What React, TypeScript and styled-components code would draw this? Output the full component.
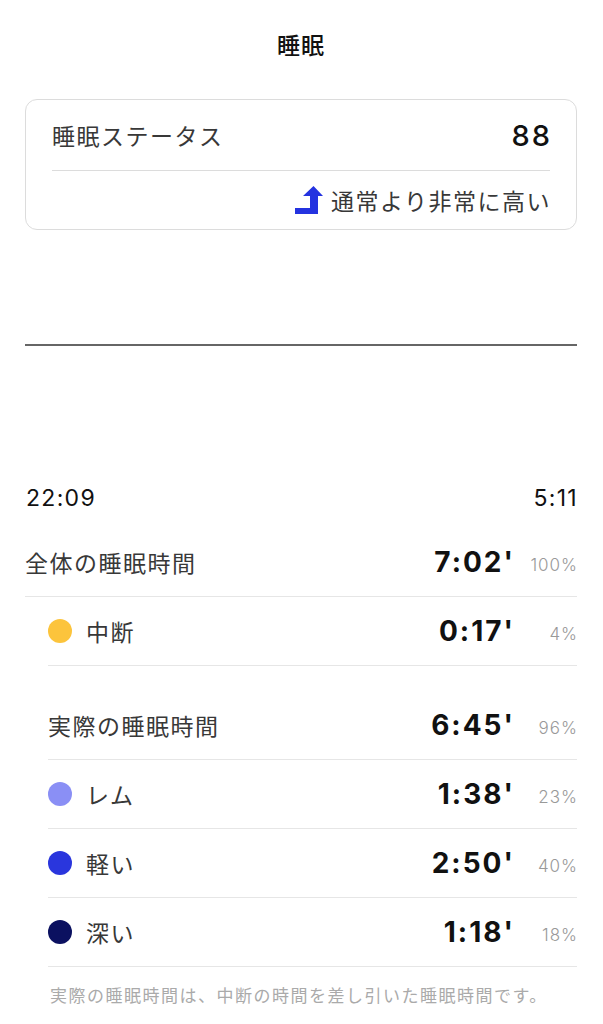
import React from 'react';
import styled, { createGlobalStyle } from 'styled-components';

const GlobalStyle = createGlobalStyle`
  body {
    margin: 0;
    background: #fff;
    font-family: "Noto Sans CJK JP", "Noto Sans", sans-serif;
    color: #222;
  }
`;

interface Stage {
  label: string;
  color: string;
  time: string;
  pct: string;
}

const stages: Stage[] = [
  { label: 'レム', color: '#8a8ff5', time: "1:38'", pct: '23%' },
  { label: '軽い', color: '#2a36dd', time: "2:50'", pct: '40%' },
  { label: '深い', color: '#0b1160', time: "1:18'", pct: '18%' },
];

const UpArrow: React.FC = () => (
  <svg width="28" height="28" viewBox="0 0 28 28">
    <polygon points="0,22 15,22 15,10 8,10 18.5,0 28,10 23,10 23,28 0,28" fill="#2433e0" />
  </svg>
);

const App: React.FC = () => {
  return (
    <Page>
      <GlobalStyle />
      <Header>睡眠</Header>

      <Card>
        <CardRow>
          <CardLabel>睡眠ステータス</CardLabel>
          <Score>88</Score>
        </CardRow>
        <CardDivider />
        <TrendRow>
          <UpArrow />
          <TrendText>通常より非常に高い</TrendText>
        </TrendRow>
      </Card>

      <ChartArea>
        <Baseline />
      </ChartArea>

      <TimeRow>
        <span>22:09</span>
        <span>5:11</span>
      </TimeRow>

      <Row>
        <Label>全体の睡眠時間</Label>
        <Value>7:02'</Value>
        <Pct>100%</Pct>
      </Row>
      <Row $indent>
        <Dot $color="#fcc43c" />
        <Label>中断</Label>
        <Value>0:17'</Value>
        <Pct>4%</Pct>
      </Row>

      <Row $indent $gap>
        <Label>実際の睡眠時間</Label>
        <Value>6:45'</Value>
        <Pct>96%</Pct>
      </Row>
      {stages.map(s => (
        <Row key={s.label} $indent>
          <Dot $color={s.color} />
          <Label>{s.label}</Label>
          <Value>{s.time}</Value>
          <Pct>{s.pct}</Pct>
        </Row>
      ))}

      <Note>実際の睡眠時間は、中断の時間を差し引いた睡眠時間です。</Note>
    </Page>
  );
};

const Page = styled.div`
  width: 603px;
  padding: 0 26px 0 25px;
  box-sizing: border-box;
`;

const Header = styled.div`
  height: 88px;
  display: flex;
  align-items: center;
  justify-content: center;
  font-size: 23px;
  font-weight: 500;
  letter-spacing: 1px;
  color: #111;
`;

const Card = styled.div`
  margin-top: 11px;
  border: 1px solid #dcdcdc;
  border-radius: 12px;
  padding: 0 26px;
`;

const CardRow = styled.div`
  height: 70px;
  display: flex;
  align-items: center;
  justify-content: space-between;
`;

const CardLabel = styled.span`
  font-size: 23px;
  letter-spacing: 1.5px;
  color: #383838;
`;

const Score = styled.span`
  font-family: Inter, "Liberation Sans", sans-serif;
  font-size: 29px;
  font-weight: 500;
  letter-spacing: 2px;
  margin-right: -2px;
  color: #111;
`;

const CardDivider = styled.div`
  height: 1px;
  background: #dcdcdc;
`;

const TrendRow = styled.div`
  height: 58px;
  display: flex;
  align-items: center;
  justify-content: flex-end;
  gap: 8px;
`;

const TrendText = styled.span`
  font-size: 23px;
  letter-spacing: 1.5px;
  margin-right: -1px;
  color: #383838;
`;

const ChartArea = styled.div`
  height: 250px;
  padding-top: 114px;
  box-sizing: border-box;
`;

const Baseline = styled.div`
  border-top: 2px solid #666;
`;

const TimeRow = styled.div`
  height: 36px;
  display: flex;
  align-items: center;
  justify-content: space-between;
  font-family: Inter, "Liberation Sans", sans-serif;
  font-size: 23px;
  letter-spacing: 1.3px;
  color: #111;
  padding-left: 1px;
  margin-right: -1px;
  margin-bottom: 12px;
`;

const Row = styled.div<{ $indent?: boolean; $gap?: boolean }>`
  height: 68px;
  display: flex;
  align-items: center;
  border-bottom: 1px solid #e6e6e6;
  margin-left: ${p => (p.$indent ? '23px' : '0')};
  margin-top: ${p => (p.$gap ? '25px' : '0')};
`;

const Dot = styled.span<{ $color: string }>`
  width: 24px;
  height: 24px;
  border-radius: 50%;
  background: ${p => p.$color};
  margin-right: 14px;
  flex-shrink: 0;
`;

const Label = styled.span`
  flex: 1;
  font-size: 23px;
  letter-spacing: 1.5px;
  color: #383838;
`;

const Value = styled.span`
  font-family: Inter, "Liberation Sans", sans-serif;
  font-size: 28px;
  font-weight: 700;
  letter-spacing: 2px;
  margin-right: -2px;
  color: #111;
`;

const Pct = styled.span`
  width: 65px;
  text-align: right;
  font-family: Inter, "Liberation Sans", sans-serif;
  font-size: 17px;
  font-weight: 300;
  letter-spacing: 1px;
  margin-right: -1px;
  color: #999;
  padding-top: 5px;
`;

const Note = styled.div`
  margin: 16px 0 0 25px;
  font-size: 17px;
  letter-spacing: 1.5px;
  color: #aaa;
  line-height: 24px;
`;

export default App;
